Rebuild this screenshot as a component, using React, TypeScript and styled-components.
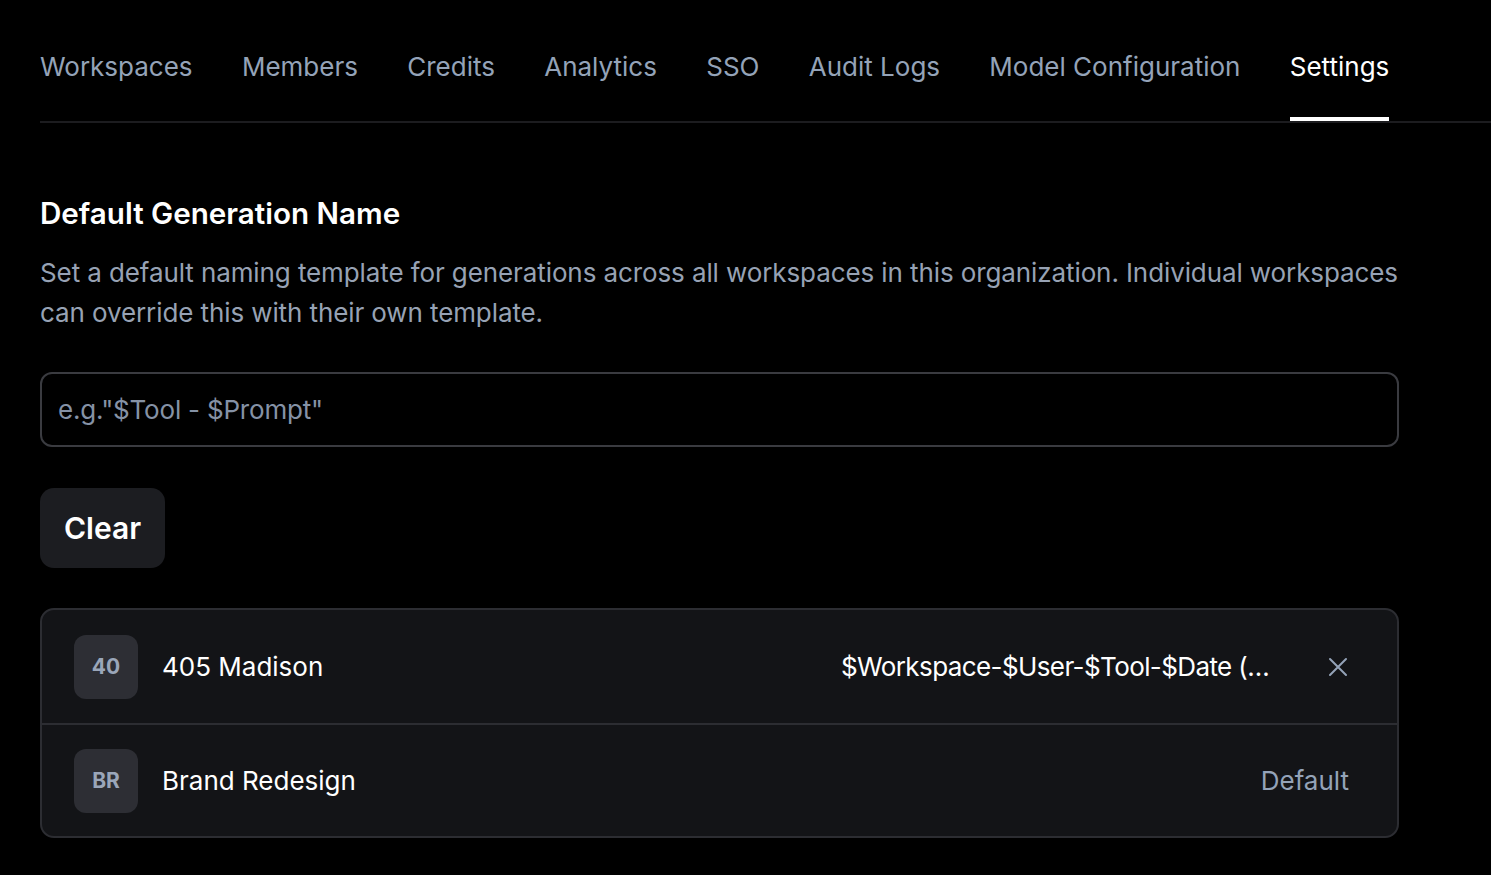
import React from "react";
import styled, { createGlobalStyle } from "styled-components";

const Global = createGlobalStyle`
  html, body { margin: 0; padding: 0; background: #000; }
  body { font-family: Inter, "Noto Sans", sans-serif; color: #fff; }
  * { box-sizing: border-box; }
`;

const Page = styled.div`
  padding: 0 0 0 40px;
  min-height: 875px;
  background: #000;
`;

const TabBar = styled.nav`
  display: flex;
  gap: 49.3px;
  border-bottom: 2px solid #1c1c1f;
  height: 123px;
  align-items: stretch;
`;

const Tab = styled.div<{ $active?: boolean }>`
  display: flex;
  align-items: flex-start;
  padding-top: 49px;
  font-size: 26px;
  line-height: 36px;
  color: ${(p) => (p.$active ? "#ffffff" : "#94a3b8")};
  border-bottom: 4px solid ${(p) => (p.$active ? "#ffffff" : "transparent")};
  white-space: nowrap;
`;

const Content = styled.div`
  width: 1359px;
  padding-top: 72px;
  display: flex;
  flex-direction: column;
`;

const Heading = styled.h2`
  margin: 0;
  font-size: 29.6px;
  line-height: 36px;
  font-weight: 600;
  color: #fff;
`;

const Description = styled.p`
  margin: 22px -24px 0 0;
  font-size: 26px;
  line-height: 40px;
  letter-spacing: -0.1px;
  color: #97a2b4;
`;

const Input = styled.input`
  margin-top: 39px;
  height: 75px;
  width: 100%;
  background: #000;
  border: 2px solid #3a3b40;
  border-radius: 12px;
  padding: 0 16px;
  font-family: inherit;
  font-size: 26px;
  letter-spacing: -0.2px;
  color: #fff;
  outline: none;
  &::placeholder { color: #8592a6; }
`;

const ClearButton = styled.button`
  margin-top: 41px;
  align-self: flex-start;
  width: 125px;
  height: 80px;
  border: none;
  border-radius: 14px;
  background: #1c1d21;
  color: #fff;
  font-family: inherit;
  font-size: 30px;
  font-weight: 600;
`;

const List = styled.div`
  margin-top: 40px;
  border: 2px solid #2c2d32;
  border-radius: 14px;
  background: #131417;
  overflow: hidden;
`;

const Row = styled.div`
  display: flex;
  align-items: center;
  height: 113px;
  padding: 0 48px 0 32px;
  & + & { border-top: 2px solid #2c2d32; }
`;

const Avatar = styled.div`
  width: 64px;
  height: 64px;
  border-radius: 12px;
  background: #2d2e34;
  color: #9aa6b9;
  font-size: 21px;
  font-weight: 700;
  display: flex;
  align-items: center;
  justify-content: center;
  flex-shrink: 0;
`;

const Name = styled.div`
  margin-left: 24px;
  font-size: 26px;
  color: #fff;
  flex: 1;
`;

const Value = styled.div<{ $muted?: boolean }>`
  font-size: 26px;
  letter-spacing: ${(p) => (p.$muted ? "0" : "-0.6px")};
  color: ${(p) => (p.$muted ? "#94a3b8" : "#fff")};
  max-width: 440px;
  white-space: nowrap;
  overflow: hidden;
  text-overflow: ellipsis;
`;

const IconButton = styled.button`
  margin-left: 46px;
  width: 22px;
  height: 22px;
  padding: 0;
  background: none;
  border: none;
  color: #94a3b8;
  display: flex;
  align-items: center;
  justify-content: center;
`;

const tabs = [
  "Workspaces",
  "Members",
  "Credits",
  "Analytics",
  "SSO",
  "Audit Logs",
  "Model Configuration",
  "Settings",
];

export default function App() {
  return (
    <>
      <Global />
      <Page>
        <TabBar>
          {tabs.map((t) => (
            <Tab key={t} $active={t === "Settings"}>
              {t}
            </Tab>
          ))}
        </TabBar>
        <Content>
          <Heading>Default Generation Name</Heading>
          <Description>
            Set a default naming template for generations across all workspaces in this organization. Individual
            workspaces can override this with their own template.
          </Description>
          <Input placeholder={'e.g."$Tool - $Prompt"'} />
          <ClearButton>Clear</ClearButton>
          <List>
            <Row>
              <Avatar>40</Avatar>
              <Name>405 Madison</Name>
              <Value>$Workspace-$User-$Tool-$Date ($Time)</Value>
              <IconButton aria-label="Remove">
                <svg width="20" height="20" viewBox="0 0 20 20" fill="none" stroke="currentColor" strokeWidth="2" strokeLinecap="round">
                  <path d="M2 2l16 16M18 2L2 18" />
                </svg>
              </IconButton>
            </Row>
            <Row>
              <Avatar>BR</Avatar>
              <Name>Brand Redesign</Name>
              <Value $muted>Default</Value>
            </Row>
          </List>
        </Content>
      </Page>
    </>
  );
}
